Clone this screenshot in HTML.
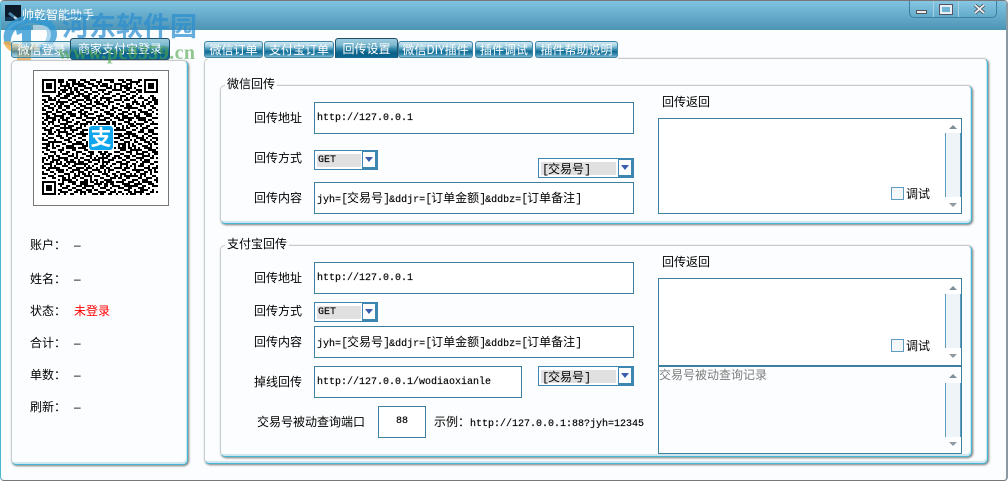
<!DOCTYPE html>
<html><head><meta charset="utf-8"><style>
html,body{margin:0;padding:0}
body{width:1008px;height:481px;overflow:hidden;position:relative;background:#fcfdfe;font:12px/14px "WenQuanYi Zen Hei","Noto Sans CJK SC",sans-serif;color:#000}
div,span{position:absolute;box-sizing:border-box}
.t{white-space:nowrap}
.tab{top:41px;height:17px;border:1px solid #3d86a6;border-radius:3px;color:#fff;text-align:center;line-height:15px;background:linear-gradient(#cfe8f2 0,#a6d3e4 25%,#3c8fb1 50%,#0f6c96 65%,#3f90b2 85%,#7fbdd4 100%);white-space:nowrap}
.tab.on{top:38px;height:22px;border:1px solid #1f4f68;line-height:20px;background:linear-gradient(#9ccbdd 0,#7db9d0 30%,#2f84a8 50%,#0b6088 70%,#0d6d98 100%)}
.panel{background:#fcfdfe;border:1px solid #c9c9c9;border-right:1px solid #45b8d5;border-bottom:1px solid #45b8d5;border-radius:5px;box-shadow:1px 1px 2px #777,inset -1px -2px 0 #cfe6ee;border-left-color:#c4ced2}
.box{background:#fff;border:1px solid #3d7f9f}
.v{font-family:"Liberation Mono",monospace;font-size:10px;line-height:31px;padding-left:2px;white-space:pre;-webkit-text-stroke:.15px #000}
.v i,.g i{font:12px/30px "WenQuanYi Zen Hei","Noto Sans CJK SC",sans-serif;font-style:normal;-webkit-text-stroke:0}
.v b,.g b{font:12px/30px "Liberation Mono",monospace;letter-spacing:-1.2px;-webkit-text-stroke:0}
.g i,.g b{line-height:13px}
.cb{background:#fff;border:1px solid #3d86b2;height:20px}
.cb .g{left:2px;top:3px;height:13px;background:#e0e0e0;white-space:pre}
.cb .b{right:0;top:0;bottom:0;width:15px;background:#fff;border:1px solid #3d86b2;border-width:1px 2px 2px 1px}
.cb .b:after{content:"";position:absolute;left:2px;top:5px;border:4px solid transparent;border-top:5px solid #3a5fb0;border-bottom:0}
.leg{background:#fcfdfe;padding:0 2px;white-space:nowrap}
.track{left:286px;width:16px;background:#eff4f8;border-left:1px solid #5f9cc2;border-right:1px solid #5f9cc2}
.up,.dn{left:290px;width:0;height:0;border:4px solid transparent}
.up{border-bottom:4px solid #7f8f99;border-top:0}.dn{border-top:4px solid #8f9aa3;border-bottom:0}
.chk{width:13px;height:13px;background:#f5f8fb;border:1px solid #5f9cc2}
</style></head><body>
<div style="left:0;top:0;width:1008px;height:481px;border:1px solid #777;border-left-color:#49b6d0;border-radius:4px;border-right:2px solid #8a9aa2"></div>
<div style="left:1px;top:1px;width:1005px;height:29px;background:linear-gradient(#7fc3e0,#4e94b5);border-top-left-radius:3px;border-top-right-radius:3px"></div>
<svg style="position:absolute;left:5px;top:5px" width="16" height="16"><rect width="16" height="16" fill="#0c1a2a"/><path d="M4 8L13 15" stroke="#4a86ae" stroke-width="3"/><path d="M9 12l3 2" stroke="#c9d6de" stroke-width="2"/><rect y="12" width="8" height="4" fill="#123450"/></svg>

<!-- watermark logo sits beneath the first tab and title -->
<svg style="position:absolute;left:0;top:0" width="62" height="64" viewBox="0 0 62 64">
<path d="M6 36c2-6 8-12 18-14v-2C12 21 5 28 6 36z" fill="#fff" opacity=".5"/>
<path d="M5 44C-1 28 14 15 32 15c15 0 25 8 25 19 0 9-8 15-17 17l-4-5c7-1 11-6 11-12 0-7-7-11-16-11C19 23 9 33 11 46z" fill="#2f97d2" opacity=".78"/>
<path d="M3 42c2 5 6 9 11 11l3-1v8h14v-9c3 0 6-1 9-2l-4-5H17c-3 0-6-1-8-3z" fill="#f3a945" opacity=".8"/>
<path d="M16 30l8-5h7v22h-9V33l-5 2z" fill="#2f97d2" opacity=".8"/>
<path d="M33 25h7c7 0 11 4 11 10s-5 10-12 10h-6z" fill="#fff" opacity=".5"/>
</svg>
<div class="t" style="left:22px;top:8px;color:#fff">帅乾智能助手</div>

<!-- window buttons -->
<div style="left:909px;top:1px;width:88px;height:17px;border:1px solid #3f7f9f;border-top:0;border-radius:0 0 5px 5px;background:linear-gradient(#86c6e2,#63abcb)"></div>
<div style="left:933px;top:1px;width:1px;height:16px;background:#a5d2e4"></div>
<div style="left:958px;top:1px;width:1px;height:16px;background:#a5d2e4"></div>
<div style="left:916px;top:10px;width:11px;height:4px;background:#e8eef2;border:1px solid #555"></div>
<div style="left:940px;top:5px;width:12px;height:9px;background:#6fb4d2;border:2px solid #e8eef2;outline:1px solid #556"></div>
<svg style="position:absolute;left:974px;top:4px" width="11" height="10"><path d="M1 1L10 9M10 1L1 9" stroke="#4a4f55" stroke-width="3.4"/><path d="M1 1L10 9M10 1L1 9" stroke="#eef2f5" stroke-width="1.8"/></svg>

<!-- tabs left -->
<div class="tab" style="left:11px;width:61px;background:linear-gradient(rgba(207,232,242,.6) 0,rgba(166,211,228,.6) 25%,rgba(60,143,177,.6) 50%,rgba(15,108,150,.65) 65%,rgba(63,144,178,.6) 85%,rgba(127,189,212,.6) 100%)">微信登录</div>
<div class="tab on" style="left:70px;width:100px">商家支付宝登录</div>

<!-- tabs right -->
<div class="tab" style="left:204px;width:59px">微信订单</div>
<div class="tab" style="left:264px;width:70px">支付宝订单</div>
<div class="tab on" style="left:335px;width:63px">回传设置</div>
<div class="tab" style="left:398px;width:75px">微信DIY插件</div>
<div class="tab" style="left:475px;width:58px">插件调试</div>
<div class="tab" style="left:535px;width:83px">插件帮助说明</div>

<!-- left panel -->
<div class="panel" style="left:11px;top:60px;width:177px;height:405px"></div>
<div style="left:33px;top:70px;width:136px;height:136px;background:#fff;border:1px solid #777"></div>
<svg style="position:absolute;left:42px;top:79px" width="116" height="116" viewBox="0 0 58 58" shape-rendering="crispEdges">
<defs>
<pattern id="a" width="19" height="17" patternUnits="userSpaceOnUse"><path fill="none" stroke="#000" d="M0 .5h3M5 .5h2M10 .5h1M13 .5h4M2 1.5h2M8 1.5h3M15 1.5h2M0 2.5h1M4 2.5h3M9 2.5h1M12 2.5h2M17 2.5h2M1 3.5h2M6 3.5h1M10 3.5h3M15 3.5h1M3 4.5h3M8 4.5h1M13 4.5h2M17 4.5h1M0 5.5h2M5 5.5h1M9 5.5h4M16 5.5h2M2 6.5h1M6 6.5h3M11 6.5h1M14 6.5h2M0 7.5h1M4 7.5h2M9 7.5h1M12 7.5h3M18 7.5h1M1 8.5h3M7 8.5h2M11 8.5h1M16 8.5h2M4 9.5h1M6 9.5h1M10 9.5h3M15 9.5h1M0 10.5h2M3 10.5h3M8 10.5h1M13 10.5h2M17 10.5h2M2 11.5h1M7 11.5h3M12 11.5h1M15 11.5h2M0 12.5h1M4 12.5h2M9 12.5h2M14 12.5h1M18 12.5h1M1 13.5h2M6 13.5h1M11 13.5h3M16 13.5h1M3 14.5h3M8 14.5h2M13 14.5h1M17 14.5h2M0 15.5h2M5 15.5h1M10 15.5h2M15 15.5h2M2 16.5h2M7 16.5h2M12 16.5h3"/></pattern>
<pattern id="b" width="23" height="13" patternUnits="userSpaceOnUse"><path fill="none" stroke="#000" d="M3 .5h1M8 .5h2M19 .5h2M0 1.5h1M5 1.5h1M12 1.5h1M18 1.5h1M21 1.5h2M7 2.5h1M15 2.5h2M20 2.5h1M3 3.5h2M9 3.5h1M13 3.5h1M18 3.5h2M0 4.5h1M11 4.5h1M16 4.5h1M21 4.5h1M6 5.5h2M14 5.5h1M19 5.5h1M2 6.5h2M10 6.5h1M17 6.5h2M22 6.5h1M5 7.5h1M8 7.5h1M15 7.5h1M20 7.5h1M0 8.5h1M12 8.5h2M18 8.5h1M3 9.5h1M9 9.5h2M16 9.5h1M21 9.5h2M6 10.5h1M13 10.5h1M19 10.5h1M1 11.5h1M10 11.5h2M17 11.5h1M4 12.5h1M7 12.5h1M14 12.5h2M22 12.5h1"/></pattern>
</defs>
<rect width="58" height="58" fill="url(#a)"/><rect width="58" height="58" fill="url(#b)"/>
<path fill="#fff" d="M0 0h8v8H0zM50 0h8v8h-8zM0 50h8v8H0z"/>
<path fill="#000" fill-rule="evenodd" d="M0 0h7v7H0zM1 1v5h5V1zM2 2h3v3H2zM51 0h7v7h-7zM52 1v5h5V1zM53 2h3v3h-3zM0 51h7v7H0zM1 52v5h5v-5zM2 53h3v3H2z"/>
</svg>
<div style="left:88px;top:125px;width:26px;height:26px;background:#fff"></div>
<div style="left:89px;top:126px;width:24px;height:24px;background:#10a6ee;border-radius:3px"></div>
<div class="t" style="left:89px;top:126px;width:24px;height:24px;color:#fff;font:bold 21px/23px 'Noto Sans CJK SC',sans-serif;text-align:center">支</div>

<div class="t" style="left:30px;top:238px">账户：</div><div class="t" style="left:74px;top:238px;font-family:'Liberation Sans'">–</div>
<div class="t" style="left:30px;top:272px">姓名：</div><div class="t" style="left:74px;top:272px;font-family:'Liberation Sans'">–</div>
<div class="t" style="left:30px;top:304px">状态：</div><div class="t" style="left:74px;top:304px;color:#f00">未登录</div>
<div class="t" style="left:30px;top:336px">合计：</div><div class="t" style="left:74px;top:336px;font-family:'Liberation Sans'">–</div>
<div class="t" style="left:30px;top:368px">单数：</div><div class="t" style="left:74px;top:368px;font-family:'Liberation Sans'">–</div>
<div class="t" style="left:30px;top:400px">刷新：</div><div class="t" style="left:74px;top:400px;font-family:'Liberation Sans'">–</div>

<!-- right panel -->
<div class="panel" style="left:204px;top:58px;width:784px;height:406px"></div>
<div style="left:204px;top:58px;width:414px;height:1px;background:#fcfdfe"></div>

<!-- group 1 -->
<div class="panel" style="left:220px;top:85px;width:752px;height:139px"></div>
<div class="leg" style="left:225px;top:77px">微信回传</div>
<div class="t" style="left:254px;top:111px">回传地址</div>
<div class="box v" style="left:314px;top:102px;width:320px;height:32px">http://127.0.0.1</div>
<div class="t" style="left:254px;top:151px">回传方式</div>
<div class="cb" style="left:314px;top:150px;width:64px"><div class="g" style="width:44px;padding-left:1px;font:10px/13px 'Liberation Mono',monospace;-webkit-text-stroke:.15px #000">GET</div><div class="b"></div></div>
<div class="cb" style="left:538px;top:158px;width:96px"><div class="g" style="width:75px;padding-left:1px"><b>[</b><i>交易号</i><b>]</b></div><div class="b"></div></div>
<div class="t" style="left:254px;top:191px">回传内容</div>
<div class="box v" style="left:314px;top:182px;width:320px;height:32px">jyh=<b>[</b><i>交易号</i><b>]</b>&amp;ddjr=<b>[</b><i>订单金额</i><b>]</b>&amp;ddbz=<b>[</b><i>订单备注</i><b>]</b></div>
<div class="t" style="left:662px;top:95px">回传返回</div>
<div class="box" style="left:658px;top:118px;width:304px;height:96px"><div class="up" style="top:6px"></div><div class="track" style="top:14px;height:64px"></div><div class="dn" style="top:84px"></div></div>
<div class="chk" style="left:891px;top:187px"></div><div class="t" style="left:906px;top:187px">调试</div>

<!-- group 2 -->
<div class="panel" style="left:220px;top:245px;width:752px;height:212px"></div>
<div class="leg" style="left:225px;top:237px">支付宝回传</div>
<div class="t" style="left:254px;top:271px">回传地址</div>
<div class="box v" style="left:314px;top:262px;width:320px;height:32px">http://127.0.0.1</div>
<div class="t" style="left:254px;top:304px">回传方式</div>
<div class="cb" style="left:314px;top:302px;width:64px"><div class="g" style="width:44px;padding-left:1px;font:10px/13px 'Liberation Mono',monospace;-webkit-text-stroke:.15px #000">GET</div><div class="b"></div></div>
<div class="t" style="left:254px;top:335px">回传内容</div>
<div class="box v" style="left:314px;top:326px;width:320px;height:32px">jyh=<b>[</b><i>交易号</i><b>]</b>&amp;ddjr=<b>[</b><i>订单金额</i><b>]</b>&amp;ddbz=<b>[</b><i>订单备注</i><b>]</b></div>
<div class="t" style="left:254px;top:375px">掉线回传</div>
<div class="box v" style="left:314px;top:366px;width:208px;height:32px">http://127.0.0.1/wodiaoxianle</div>
<div class="cb" style="left:538px;top:366px;width:96px"><div class="g" style="width:75px;padding-left:1px"><b>[</b><i>交易号</i><b>]</b></div><div class="b"></div></div>
<div class="t" style="left:257px;top:415px">交易号被动查询端口</div>
<div class="box" style="left:378px;top:406px;width:48px;height:32px;text-align:center;font:10px/30px 'Liberation Mono',monospace;-webkit-text-stroke:.15px #000">88</div>
<div class="t" style="left:434px;top:415px">示例：<span style="position:static;font:10px/14px 'Liberation Mono',monospace;-webkit-text-stroke:.15px #000">http://127.0.0.1:88?jyh=12345</span></div>
<div class="t" style="left:662px;top:255px">回传返回</div>
<div class="box" style="left:658px;top:278px;width:304px;height:88px"><div class="up" style="top:7px"></div><div class="track" style="top:15px;height:54px"></div><div class="dn" style="top:75px"></div></div>
<div class="chk" style="left:891px;top:339px"></div><div class="t" style="left:906px;top:339px">调试</div>
<div class="box" style="left:658px;top:366px;width:304px;height:88px;background:#fcfdfe;color:#7d7d7d"><div class="t" style="left:0;top:1px">交易号被动查询记录</div><div class="up" style="top:7px"></div><div class="track" style="top:16px;height:54px"></div><div class="dn" style="top:75px"></div></div>

<!-- watermark text -->
<div class="t" style="left:62px;top:9px;font:bold 27px/32px 'Noto Sans CJK SC',sans-serif;color:#2c8fd0;opacity:.72">河东软件园</div>
<div class="t" style="left:58px;top:43px;font:bold 20px/20px 'Liberation Serif',serif;color:#4fa64c;opacity:.62;letter-spacing:.4px">www.pc0359.cn</div>
</body></html>
